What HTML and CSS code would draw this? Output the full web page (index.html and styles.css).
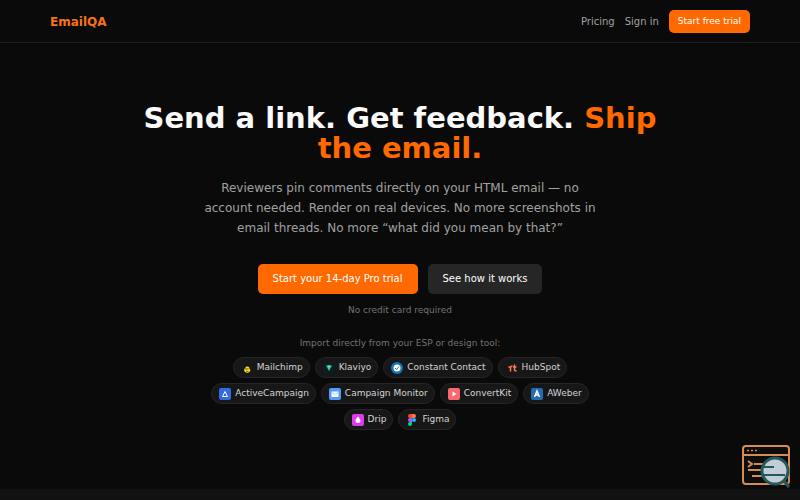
FILE: index.html
```html
<!DOCTYPE html>
<html lang="en">
  <head>
    <meta charset="utf-8">
    <meta name="viewport" content="width=device-width, initial-scale=1">
    <title>EmailQA</title>
    <link rel="stylesheet" href="styles.css">
  </head>
  <body>
    <header class="header">
      <div class="header-inner">
        <a class="logo" href="#">EmailQA</a>
        <nav class="nav">
          <a href="#">Pricing</a>
          <a href="#">Sign in</a>
          <a class="btn btn-small" href="#">Start free trial</a>
        </nav>
      </div>
    </header>

    <main class="hero">
      <h1>Send a link. Get feedback. <span class="accent">Ship the email.</span></h1>
      <p class="lead">Reviewers pin comments directly on your HTML email — no account needed. Render on real devices. No more screenshots in email threads. No more “what did you mean by that?”</p>
      <div class="actions">
        <a class="btn" href="#">Start your 14-day Pro trial</a>
        <a class="btn btn-dark" href="#">See how it works</a>
      </div>
      <p class="note">No credit card required</p>
      <p class="note import">Import directly from your ESP or design tool:</p>

      <ul class="tools">
        <li>
          <svg viewBox="0 0 24 24"><path d="M6 16c0-4 3-4 5-7 4-1 7 2 6 5 3 1 2 6-2 7-4 1-8 0-9-5z" fill="#ffe01b"/><path d="M6 14c3-1 6 1 9-1M10 18c2 1 3 1 5 0" fill="none" stroke="#222" stroke-width="1.5"/></svg>
          Mailchimp
        </li>
        <li>
          <svg viewBox="0 0 24 24"><rect width="24" height="24" rx="4" fill="#101c21"/><path d="M6 7h12l-6 11z" fill="#27c98f"/><path d="M9 7h6l-3 5z" fill="#75edba"/></svg>
          Klaviyo
        </li>
        <li>
          <svg viewBox="0 0 24 24"><circle cx="12" cy="12" r="12" fill="#1474b8"/><circle cx="12" cy="12" r="7" fill="#fff"/><path d="M8 12l3 3 5-6" fill="none" stroke="#1474b8" stroke-width="2"/></svg>
          Constant Contact
        </li>
        <li>
          <svg viewBox="0 0 24 24"><path d="M5 9l4 3v7M9 12c0-3 2-4 4-4M17 5v10c0 2 1 3 4 3M14 10h7" fill="none" stroke="#ff7a59" stroke-width="3"/></svg>
          HubSpot
        </li>
        <li>
          <svg viewBox="0 0 24 24"><rect width="24" height="24" rx="4" fill="#356ae6"/><path d="M12 7l5 10H7z" fill="none" stroke="#fff" stroke-width="2"/></svg>
          ActiveCampaign
        </li>
        <li>
          <svg viewBox="0 0 24 24"><rect width="24" height="24" rx="4" fill="#509cf6"/><rect x="5" y="7" width="14" height="11" rx="1" fill="#fff"/><path d="M5 8l7 5 7-5" fill="none" stroke="#a9cef9" stroke-width="2"/></svg>
          Campaign Monitor
        </li>
        <li>
          <svg viewBox="0 0 24 24"><rect width="24" height="24" rx="4" fill="#fb6970"/><path d="M9 7l8 5-8 5z" fill="#fff"/></svg>
          ConvertKit
        </li>
        <li>
          <svg viewBox="0 0 24 24"><rect width="24" height="24" rx="4" fill="#246bb2"/><path d="M7 18l5-12 5 12M9 14h6" fill="none" stroke="#fff" stroke-width="3"/></svg>
          AWeber
        </li>
        <li>
          <svg viewBox="0 0 24 24"><rect width="24" height="24" rx="4" fill="#dd3de8"/><path d="M12 5c3 4 5 6 5 8a5 5 0 0 1-10 0c0-2 2-4 5-8z" fill="#fff"/></svg>
          Drip
        </li>
        <li>
          <svg viewBox="0 0 24 24"><path d="M12 0H8a4 4 0 0 0 0 8h4z" fill="#f24e1e"/><path d="M12 0h4a4 4 0 0 1 0 8h-4z" fill="#ff7262"/><path d="M12 8H8a4 4 0 0 0 0 8h4z" fill="#a259ff"/><circle cx="16" cy="12" r="4" fill="#1abcfe"/><path d="M12 16H8a4 4 0 1 0 4 4z" fill="#0acf83"/></svg>
          Figma
        </li>
      </ul>
    </main>

    <section class="band"></section>

    <div class="badge">
      <svg viewBox="0 0 48 44">
        <rect x="1" y="2" width="46" height="38" rx="3" fill="#0d0d0d" stroke="#d58d54" stroke-width="2"/>
        <path d="M1 11h46" stroke="#d58d54" stroke-width="2"/>
        <path d="M5 6.500h2M9 6.500h2M13 6.500h2" stroke="#d58d54" stroke-width="1.500"/>
        <path d="M6 17l4 3-4 3M12 20h12M6 26h14M10 32h12" fill="none" stroke="#d58d54" stroke-width="2"/>
        <path d="M42 37l5 6" stroke="#24595b" stroke-width="3"/>
        <circle cx="33" cy="27" r="13" fill="#c3cdd8" stroke="#24595b" stroke-width="3"/>
        <path d="M21 23h11M22 31h21" stroke="#24595b" stroke-width="2"/>
      </svg>
    </div>
  </body>
</html>
```
FILE: styles.css
```css
* {
  box-sizing: border-box;
}

body {
  display: flex;
  flex-direction: column;
  min-height: 100vh;
  margin: 0;
  background: #0a0a0a;
  color: #fafafa;
  font-family: "DejaVu Sans", sans-serif;
  font-size: 10px;
}

a {
  color: inherit;
  text-decoration: none;
}

.header {
  border-bottom: 1px solid #1f1f1f;
}

.header-inner {
  display: flex;
  align-items: center;
  justify-content: space-between;
  max-width: 720px;
  margin: 0 auto;
  padding: 10px 10px 9px;
}

.logo {
  color: #f97316;
  font-size: 12px;
  font-weight: bold;
}

.nav {
  display: flex;
  align-items: center;
  gap: 10px;
  color: #a1a1a1;
}

.btn {
  padding: 8px 15px;
  border-radius: 5px;
  background: #ff6900;
  color: #fff;
  line-height: 14px;
}

.btn-small {
  padding: 4px 9px;
  font-size: 9px;
  line-height: 15px;
}

.btn-dark {
  background: #262626;
}

.hero {
  width: 100%;
  max-width: 600px;
  margin: 0 auto;
  padding: 60px 20px 59px;
  text-align: center;
}

h1 {
  margin: 0 0 15px;
  font-size: 29px;
  line-height: 30px;
}

.accent {
  color: #ff6900;
}

.lead {
  max-width: 405px;
  margin: 0 auto 26px;
  color: #a1a1a1;
  font-size: 12px;
  line-height: 20px;
}

.actions {
  display: flex;
  justify-content: center;
  gap: 10px;
}

.note {
  margin: 10px 0 0;
  color: #737373;
  font-size: 9px;
  line-height: 12px;
}

.import {
  margin-top: 21px;
}

.tools {
  display: flex;
  flex-wrap: wrap;
  justify-content: center;
  gap: 5px;
  max-width: 400px;
  margin: 8px auto 0;
  padding: 0;
  list-style: none;
}

.tools li {
  display: flex;
  align-items: center;
  gap: 4px;
  padding: 3px 6px 3px 7px;
  border: 1px solid #262626;
  border-radius: 11px;
  background: #171717;
  color: #d4d4d4;
  font-size: 9px;
  line-height: 13px;
}

.tools svg {
  width: 12px;
  height: 12px;
}

.band {
  flex: 1;
  background: #111;
}

.badge {
  position: fixed;
  right: 10px;
  bottom: 12px;
}

.badge svg {
  display: block;
  width: 48px;
  height: 44px;
}
```
